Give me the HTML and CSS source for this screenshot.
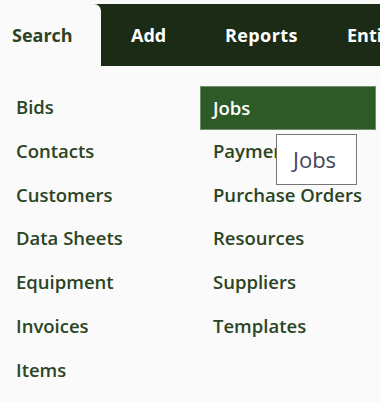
FILE: index.html
```html
<!DOCTYPE html>
<html>
<head>
<meta charset="utf-8">
<link rel="stylesheet" href="styles.css">
</head>
<body>
<div class="page">
  <nav class="tabs">
    <div class="tab active">Search</div>
    <div class="bar">
      <div class="tab add">Add</div>
      <div class="tab reports">Reports</div>
      <div class="tab ent">Entities</div>
    </div>
  </nav>
  <div class="menu">
    <ul class="col left">
      <li>Bids</li>
      <li>Contacts</li>
      <li>Customers</li>
      <li>Data Sheets</li>
      <li>Equipment</li>
      <li>Invoices</li>
      <li>Items</li>
    </ul>
    <ul class="col right">
      <li class="selected">Jobs</li>
      <li>Payments</li>
      <li>Purchase Orders</li>
      <li>Resources</li>
      <li>Suppliers</li>
      <li>Templates</li>
    </ul>
    <div class="tooltip">Jobs</div>
  </div>
</div>
</body>
</html>
```

FILE: styles.css
```css
html, body {
  margin: 0;
  padding: 0;
  background: #fafafa;
}
.page {
  width: 380px;
  height: 402px;
  overflow: hidden;
  font-family: "Open Sans", "Noto Sans", sans-serif;
}
.tabs {
  display: flex;
  padding-top: 4px;
  height: 62px;
}
.tab {
  font-weight: 700;
  font-size: 18px;
  white-space: nowrap;
  flex-shrink: 0;
}
.tab.active {
  width: 101px;
  box-sizing: border-box;
  padding-left: 12px;
  padding-top: 19px;
  color: #2a4322;
  background: #fafafa;
  border-top-right-radius: 7px;
  position: relative;
  z-index: 1;
}
.bar {
  flex: 1;
  min-width: 0;
  background: #1b2b16;
  margin-left: -8px;
  padding-left: 38px;
  display: flex;
  padding-top: 19px;
  box-sizing: border-box;
  overflow: hidden;
  color: #ffffff;
}
.tab.add { width: 94px; }
.tab.reports { width: 122px; letter-spacing: 0.4px; }
.menu {
  position: relative;
  display: grid;
  grid-template-columns: 200px 176px;
  padding-top: 20px;
}
.col {
  list-style: none;
  margin: 0;
  padding: 0;
}
.col li {
  height: 43.8px;
  line-height: 41px;
  font-size: 18.5px;
  font-weight: 600;
  color: #2b4424;
  white-space: nowrap;
}
.left li { padding-left: 16px; }
.right li {
  padding-left: 13px;
  box-sizing: border-box;
}
.right li.selected {
  background: #2d5a27;
  color: #ffffff;
  border: 1px solid #6f8f6a;
  padding-left: 12px;
}
.tooltip {
  position: absolute;
  left: 276px;
  top: 68px;
  width: 81px;
  height: 51px;
  box-sizing: border-box;
  background: #ffffff;
  border: 1px solid #767676;
  color: #45455a;
  font-family: "Open Sans", sans-serif;
  font-size: 22px;
  font-weight: 400;
  line-height: 48px;
  padding-left: 16px;
}
```
